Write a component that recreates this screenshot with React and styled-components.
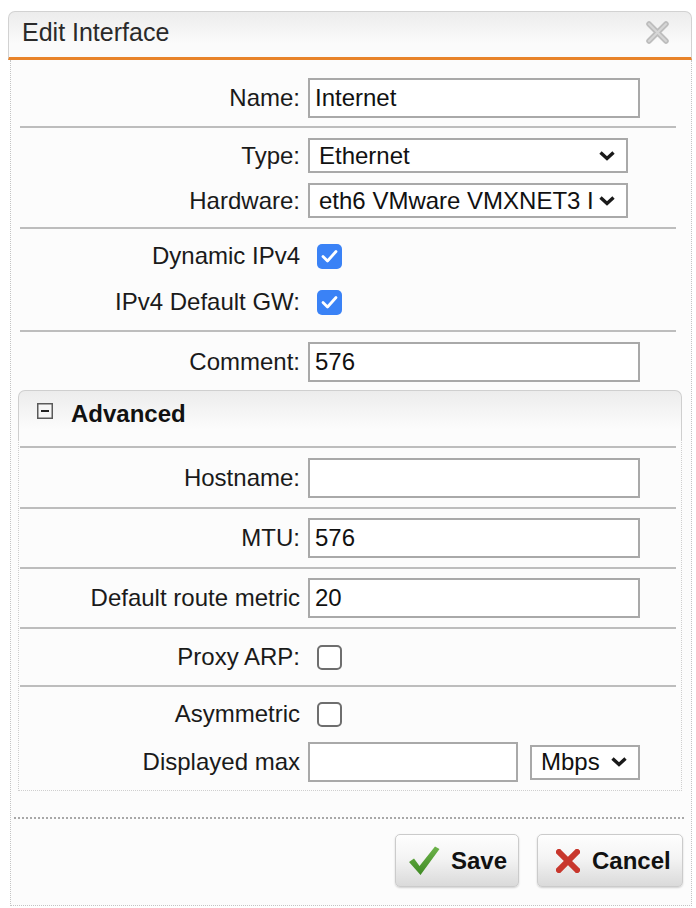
import React from "react";
import styled, { createGlobalStyle } from "styled-components";

const GlobalStyle = createGlobalStyle`
  html, body {
    margin: 0;
    padding: 0;
    background: #ffffff;
  }
  body {
    font-family: "Liberation Sans", Arial, sans-serif;
    color: #1a1a1a;
  }
  * {
    box-sizing: border-box;
  }
`;

const Dialog = styled.div`
  width: 684px;
  margin: 11px 0 0 8px;
`;

const Header = styled.div`
  height: 49px;
  display: flex;
  align-items: center;
  justify-content: space-between;
  padding: 0 21px 4px 13px;
  border: 1px solid #d2d2d2;
  border-bottom: 3px solid #e8832a;
  border-radius: 7px 7px 0 0;
  background: linear-gradient(#ececec, #fbfbfb 70%);
`;

const Title = styled.div`
  font-size: 25px;
  color: #2a2a2a;
`;

const Body = styled.div`
  margin-left: 2px;
  background: #fcfcfc;
  border: 1px dotted #c4c4c4;
  border-top: none;
`;

const Section = styled.div`
  display: flex;
  flex-direction: column;
  gap: ${(p) => p.$gap || 0}px;
  padding: ${(p) => p.$pad || "0"};
`;

const Divider = styled.div`
  height: 2px;
  background: #bdbdbd;
  margin: ${(p) => (p.$inPanel ? "0 5px 0 1px" : "0 15px 0 9px")};
`;

const Row = styled.div`
  display: grid;
  grid-template-columns: ${(p) => p.$labelWidth}px auto;
  column-gap: 8px;
  align-items: center;
  min-height: ${(p) => p.$height || 0}px;
`;

const Label = styled.label`
  font-size: 24px;
  text-align: right;
  color: #1a1a1a;
  white-space: nowrap;
`;

const Field = styled.div`
  display: flex;
  align-items: center;
  gap: 12px;
`;

const TextInput = styled.div`
  width: ${(p) => p.$width || 332}px;
  height: 40px;
  border: 2px solid #a9a9a9;
  background: #ffffff;
  padding: 0 5px;
  display: flex;
  align-items: center;
  font-size: 24px;
  color: #111;
`;

const Select = styled.div`
  width: ${(p) => p.$width || 320}px;
  height: 35px;
  border: 2px solid #a9a9a9;
  background: #ffffff;
  padding: 0 10px 0 9px;
  display: flex;
  align-items: center;
  gap: 4px;
  font-size: 24px;
  color: #111;
`;

const SelectText = styled.span`
  flex: 1;
  white-space: nowrap;
`;

const Checkbox = styled.div`
  width: 25px;
  height: 25px;
  margin-left: 9px;
  border-radius: 5px;
  display: flex;
  align-items: center;
  justify-content: center;
  background: ${(p) => (p.$checked ? "#3a82f6" : "#ffffff")};
  border: ${(p) => (p.$checked ? "none" : "2px solid #6e6e6e")};
`;

const Panel = styled.div`
  margin: 0 9px 0 7px;
`;

const PanelHeader = styled.div`
  height: 49px;
  display: flex;
  align-items: flex-start;
  gap: 18px;
  padding: 12px 0 0 18px;
  border: 1px solid #cfcfcf;
  border-bottom: none;
  border-radius: 7px 7px 0 0;
  background: linear-gradient(#ececec, #fcfcfc 80%);
`;

const PanelTitle = styled.div`
  font-size: 24px;
  font-weight: bold;
  color: #111;
  margin-top: -3px;
`;

const PanelBody = styled.div`
  padding-top: 7px;
  border: 1px dotted #cfcfcf;
  border-top: none;
`;

const FooterLine = styled.div`
  margin: 26px 7px 0 3px;
  border-top: 2px dotted #a8a8a8;
`;

const Footer = styled.div`
  display: flex;
  justify-content: flex-end;
  gap: 18px;
  padding: 15px 8px 18px 0;
`;

const Button = styled.button`
  width: ${(p) => p.$width}px;
  height: 53px;
  display: flex;
  align-items: center;
  gap: ${(p) => p.$gap}px;
  padding: 0 0 0 ${(p) => p.$padLeft}px;
  border: 1px solid #cbcbcb;
  border-radius: 5px;
  background: linear-gradient(#fefefe, #f4f4f4 45%, #dadada);
  box-shadow: 0 1px 2px rgba(0, 0, 0, 0.18);
  font-family: "Liberation Sans", Arial, sans-serif;
  font-size: 24px;
  font-weight: bold;
  color: #111;
`;

const CloseIcon = () => (
  <svg width="25" height="25" viewBox="0 0 25 25">
    <path d="M4 4 L21 21 M21 4 L4 21" stroke="#bdbdbd" strokeWidth="5.5" strokeLinecap="round" />
    <path d="M4 4 L21 21 M21 4 L4 21" stroke="#d6d6d6" strokeWidth="2" strokeLinecap="round" />
  </svg>
);

const Chevron = () => (
  <svg width="18" height="12" viewBox="0 0 18 12">
    <polyline points="2.5,2.5 9,8.5 15.5,2.5" fill="none" stroke="#1a1a1a" strokeWidth="3.4" />
  </svg>
);

const Tick = () => (
  <svg width="17" height="14" viewBox="0 0 17 14">
    <polyline points="2,7.5 6.5,12 15,2.5" fill="none" stroke="#ffffff" strokeWidth="2.8" strokeLinecap="round" strokeLinejoin="round" />
  </svg>
);

const CollapseIcon = () => (
  <svg width="16" height="16" viewBox="0 0 16 16">
    <rect x="0.75" y="0.75" width="14.5" height="14.5" fill="#f6f6f6" stroke="#5a5a5a" strokeWidth="1.5" />
    <line x1="4" y1="8" x2="12" y2="8" stroke="#222" strokeWidth="2" />
  </svg>
);

const SaveIcon = () => (
  <svg width="32" height="30" viewBox="0 0 32 30">
    <defs>
      <linearGradient id="g" x1="0" y1="0" x2="0" y2="1">
        <stop offset="0" stopColor="#6db34a" />
        <stop offset="1" stopColor="#3f8a24" />
      </linearGradient>
    </defs>
    <path d="M1 16 L6 12.5 L11.5 20 L27 0.5 L31.5 3 L12.5 29 Z" fill="url(#g)" />
  </svg>
);

const CancelIcon = () => (
  <svg width="24" height="24" viewBox="0 0 24 24">
    <path d="M3 3 L21 21 M21 3 L3 21" stroke="#c8372d" strokeWidth="6" strokeLinecap="square" />
  </svg>
);

const MAIN = 289;
const PANEL = 281;

const TextRow = ({ label, value, labelWidth }) => (
  <Row $labelWidth={labelWidth}>
    <Label>{label}</Label>
    <TextInput>{value}</TextInput>
  </Row>
);

const CheckRow = ({ label, checked, labelWidth, height }) => (
  <Row $labelWidth={labelWidth} $height={height}>
    <Label>{label}</Label>
    <Checkbox $checked={checked}>{checked && <Tick />}</Checkbox>
  </Row>
);

export default function App() {
  return (
    <>
      <GlobalStyle />
      <Dialog>
        <Header>
          <Title>Edit Interface</Title>
          <CloseIcon />
        </Header>
        <Body>
          <Section $pad="18px 0 8px">
            <TextRow label="Name:" value="Internet" labelWidth={MAIN} />
          </Section>
          <Divider />
          <Section $pad="10px 0 9px" $gap={10}>
            <Row $labelWidth={MAIN}>
              <Label>Type:</Label>
              <Select>
                <SelectText>Ethernet</SelectText>
                <Chevron />
              </Select>
            </Row>
            <Row $labelWidth={MAIN}>
              <Label>Hardware:</Label>
              <Select>
                <SelectText>eth6 VMware VMXNET3 I</SelectText>
                <Chevron />
              </Select>
            </Row>
          </Section>
          <Divider />
          <Section $pad="4px 0 5px">
            <CheckRow label="Dynamic IPv4" checked labelWidth={MAIN} height={46} />
            <CheckRow label="IPv4 Default GW:" checked labelWidth={MAIN} height={46} />
          </Section>
          <Divider />
          <Section $pad="10px 0 8px">
            <TextRow label="Comment:" value="576" labelWidth={MAIN} />
          </Section>

          <Panel>
            <PanelHeader>
              <CollapseIcon />
              <PanelTitle>Advanced</PanelTitle>
            </PanelHeader>
            <PanelBody>
              <Divider $inPanel />
              <Section $pad="10px 0 9px">
                <TextRow label="Hostname:" value="" labelWidth={PANEL} />
              </Section>
              <Divider $inPanel />
              <Section $pad="9px 0 9px">
                <TextRow label="MTU:" value="576" labelWidth={PANEL} />
              </Section>
              <Divider $inPanel />
              <Section $pad="9px 0 9px">
                <TextRow label="Default route metric" value="20" labelWidth={PANEL} />
              </Section>
              <Divider $inPanel />
              <Section>
                <CheckRow label="Proxy ARP:" labelWidth={PANEL} height={56} />
              </Section>
              <Divider $inPanel />
              <Section $pad="4px 0 8px" $gap={5}>
                <CheckRow label="Asymmetric" labelWidth={PANEL} height={46} />
                <Row $labelWidth={PANEL}>
                  <Label>Displayed max</Label>
                  <Field>
                    <TextInput $width={210} />
                    <Select $width={110}>
                      <SelectText>Mbps</SelectText>
                      <Chevron />
                    </Select>
                  </Field>
                </Row>
              </Section>
            </PanelBody>
          </Panel>

          <FooterLine />
          <Footer>
            <Button $width={124} $padLeft={12} $gap={11}>
              <SaveIcon />
              Save
            </Button>
            <Button $width={146} $padLeft={18} $gap={12}>
              <CancelIcon />
              Cancel
            </Button>
          </Footer>
        </Body>
      </Dialog>
    </>
  );
}
